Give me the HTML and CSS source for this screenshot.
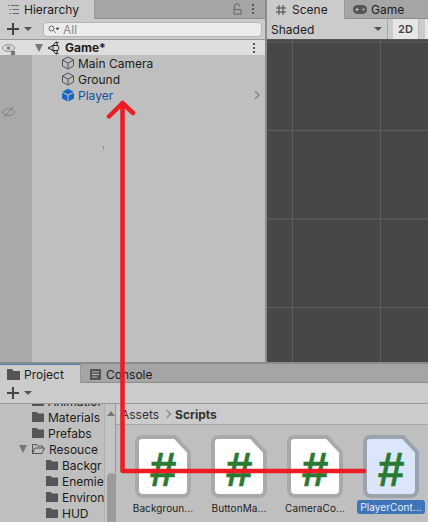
FILE: index.html
```html
<!DOCTYPE html>
<html lang="en">
<head>
  <meta charset="UTF-8">
  <title>Unity Editor</title>
  <link rel="stylesheet" href="styles.css">
</head>
<body>
  <div class="editor">
    <div class="top">
      <section class="hierarchy">
        <div class="tabbar">
          <div class="tab tab-first">
            <svg width="11" height="11" viewBox="0 0 11 11"><path d="M0 1.500h1.500M3 1.500h8M1.500 5.500H3M4.500 5.500H11M1.500 9.500H3M4.500 9.500H11" stroke="#666" fill="none"/></svg>
            <span>Hierarchy</span>
          </div>
          <div class="tab-tools">
            <svg width="9" height="12" viewBox="0 0 9 12"><path d="M1 6.500h7v4.500H1zM1.500 6.500V3.200a2.500 2.500 0 0 1 5 0" stroke="#666" fill="none"/></svg>
            <span class="dots"><i></i><i></i><i></i></span>
          </div>
        </div>
        <div class="toolbar">
          <div class="plus"><span class="plus-sign"></span><span class="caret"></span></div>
          <div class="search">
            <svg width="11" height="9" viewBox="0 0 11 9"><circle cx="3.500" cy="3.500" r="2.500" stroke="#666" fill="none"/><path d="M5.500 5.500l2.500 2.500M8 3h3l-1.500 2z" stroke="#666" stroke-width=".8"/></svg>
            <span>All</span>
          </div>
        </div>
        <div class="hier-body">
          <div class="eye-col">
            <svg class="eye" width="15" height="12" viewBox="0 0 15 12"><path d="M1 5c2-2.600 4-3.500 6.500-3.500S12 2.400 14 5c-2 2.600-4 3.500-6.500 3.500S3 7.600 1 5z" stroke="#8a8a8a" fill="none"/><circle cx="7.500" cy="5" r="2" fill="#8a8a8a"/><rect x="10" y="8" width="4" height="4" fill="#777"/></svg>
            <svg class="eye-off" width="15" height="12" viewBox="0 0 15 12"><path d="M1 6c2-2.600 4-3.500 6.500-3.500S12 3.400 14 6c-2 2.600-4 3.500-6.500 3.500S3 8.600 1 6zM3 11.500L12 .5" stroke="#808080" fill="none"/></svg>
          </div>
          <div class="tree">
            <div class="scene-row">
              <span class="tri"></span>
              <svg width="14" height="14" viewBox="0 0 14 14"><path d="M1 7l5-2.500L9 1l2.500.5M1 7l5 2.500L9 13l2.500-.5M6 4.500v5M9 1l3 6-3 6M6 4.500h5M6 9.500h5" stroke="#222" fill="none"/></svg>
              <b>Game*</b>
              <span class="dots"><i></i><i></i><i></i></span>
            </div>
            <div class="obj-row">
              <svg width="14" height="14" viewBox="0 0 14 14"><path d="M7 1l5.500 3v6L7 13l-5.500-3V4zM1.500 4L7 7l5.500-3M7 7v6" stroke="#555" fill="none"/></svg>
              <span>Main Camera</span>
            </div>
            <div class="obj-row">
              <svg width="14" height="14" viewBox="0 0 14 14"><path d="M7 1l5.500 3v6L7 13l-5.500-3V4zM1.500 4L7 7l5.500-3M7 7v6" stroke="#555" fill="none"/></svg>
              <span>Ground</span>
            </div>
            <div class="obj-row player">
              <svg width="14" height="14" viewBox="0 0 14 14"><path d="M7 .8l5.800 3L7 6.600 1.200 3.800zM1 4.800l5.500 2.800v5.900L1 10.500zM13 4.800L7.500 7.600v5.900l5.500-3z" fill="#1668c4"/></svg>
              <span>Player</span>
              <svg class="chev" width="7" height="10" viewBox="0 0 7 10"><path d="M1 1l4 4-4 4" stroke="#808080" stroke-width="1.300" fill="none"/></svg>
            </div>
          </div>
        </div>
      </section>
      <section class="scene">
        <div class="tabbar">
          <div class="tab tab-scene">
            <svg width="10" height="10" viewBox="0 0 10 10"><path d="M3 0v10M7 0v10M0 3h10M0 7h10" stroke="#444" fill="none"/></svg>
            <span>Scene</span>
          </div>
          <div class="tab tab-game">
            <svg width="14" height="9" viewBox="0 0 14 9"><rect width="14" height="9" rx="4.500" fill="#555"/><path d="M2.500 4.500h3M4 3v3" stroke="#ccc"/><circle cx="10.500" cy="4.500" r="1" fill="#ccc"/></svg>
            <span>Game</span>
          </div>
        </div>
        <div class="toolbar scene-tools">
          <div class="shaded"><span>Shaded</span><span class="caret"></span></div>
          <div class="btn-2d">2D</div>
          <div class="btn-next"></div>
        </div>
        <div class="viewport"></div>
      </section>
    </div>
    <section class="project">
      <div class="tabbar">
        <div class="tab tab-project">
          <svg width="13" height="11" viewBox="0 0 13 11"><path d="M0 0h5l1.500 2H13v9H0z" fill="#555"/></svg>
          <span>Project</span>
        </div>
        <div class="tab tab-console">
          <svg width="11" height="11" viewBox="0 0 11 11"><rect width="11" height="11" fill="#555"/><path d="M2 3h7M2 5.500h7M2 8h5" stroke="#bbb"/></svg>
          <span>Console</span>
        </div>
      </div>
      <div class="toolbar">
        <div class="plus"><span class="plus-sign"></span><span class="caret"></span></div>
      </div>
      <div class="project-body">
        <div class="folders">
          <div class="folder-list">
            <div class="folder"><span class="fld"></span>Animatior</div>
            <div class="folder"><span class="fld"></span>Materials</div>
            <div class="folder"><span class="fld"></span>Prefabs</div>
            <div class="folder parent">
              <span class="tri"></span>
              <svg width="13" height="10" viewBox="0 0 13 10"><path d="M.5 9.500V.5h4l1 1.500h5v2M.5 9.500h9.500l2.500-5.500H3z" stroke="#555" fill="none"/></svg>
              Resouce
            </div>
            <div class="folder sub"><span class="fld"></span>Backgr</div>
            <div class="folder sub"><span class="fld"></span>Enemie</div>
            <div class="folder sub"><span class="fld"></span>Environ</div>
            <div class="folder sub"><span class="fld"></span>HUD</div>
          </div>
          <div class="scrollbar"><span class="arrow-up"></span><span class="thumb"></span></div>
        </div>
        <div class="assets">
          <div class="crumbs"><span>Assets</span><span class="sep"></span><b>Scripts</b></div>
          <div class="grid">
            <div class="script">
              <svg class="page" width="56" height="63" viewBox="0 0 56 63"><path d="M7 2h33l14 15v38a6 6 0 0 1-6 6H8a6 6 0 0 1-6-6V7a5 5 0 0 1 5-5z"/><text x="28" y="51">#</text></svg>
              <p>Backgroun...</p>
            </div>
            <div class="script">
              <svg class="page" width="56" height="63" viewBox="0 0 56 63"><path d="M7 2h33l14 15v38a6 6 0 0 1-6 6H8a6 6 0 0 1-6-6V7a5 5 0 0 1 5-5z"/><text x="28" y="51">#</text></svg>
              <p>ButtonMa...</p>
            </div>
            <div class="script">
              <svg class="page" width="56" height="63" viewBox="0 0 56 63"><path d="M7 2h33l14 15v38a6 6 0 0 1-6 6H8a6 6 0 0 1-6-6V7a5 5 0 0 1 5-5z"/><text x="28" y="51">#</text></svg>
              <p>CameraCo...</p>
            </div>
            <div class="script picked">
              <svg class="page" width="56" height="63" viewBox="0 0 56 63"><path d="M7 2h33l14 15v38a6 6 0 0 1-6 6H8a6 6 0 0 1-6-6V7a5 5 0 0 1 5-5z"/><text x="28" y="51">#</text></svg>
              <p>PlayerCont...</p>
            </div>
          </div>
        </div>
      </div>
    </section>
    <svg class="arrow" width="428" height="522" viewBox="0 0 428 522">
      <rect x="103" y="146" width="1" height="3" fill="#8a8a8a"/>
      <path d="M122.500 471V103M109 116.500L122.500 103 133 113M122.500 471H364" stroke="#ed1c24" stroke-width="4.500" fill="none" stroke-linecap="round" stroke-linejoin="round"/>
    </svg>
  </div>
</body>
</html>
```

FILE: styles.css
```css
* {
  box-sizing: border-box;
}

body {
  margin: 0;
  font-family: "Inter", "Liberation Sans", sans-serif;
  font-size: 12px;
  color: #1c1c1c;
  background: #8c8c8c;
}

.editor {
  position: relative;
  width: 428px;
  height: 522px;
  overflow: hidden;
  display: flex;
  flex-direction: column;
}

.top {
  flex: none;
  height: 362px;
  display: flex;
  gap: 2px;
}

/* tabs */
.tabbar {
  flex: none;
  height: 19px;
  display: flex;
  background: #a5a5a5;
  border-bottom: 1px solid #8e8e8e;
}

.tab {
  height: 19px;
  display: flex;
  align-items: center;
  gap: 5px;
  padding-left: 8px;
}

.tab-first {
  width: 95px;
  background: #cbcbcb;
  border-right: 1px solid #999;
}

.tab-scene {
  width: 78px;
  padding-left: 9px;
  gap: 6px;
  background: #cbcbcb;
  border-right: 1px solid #999;
}

.tab-game {
  gap: 4px;
}

.tab-project {
  width: 81px;
  padding-left: 7px;
  gap: 4px;
  background: #cbcbcb;
  border-top: 1px solid #4a82c3;
  border-right: 1px solid #999;
}

.tab-console {
  padding-left: 9px;
  padding-top: 1px;
}

.tab-tools {
  margin-left: auto;
  display: flex;
  align-items: center;
  gap: 10px;
  padding-right: 11px;
}

/* toolbars */
.toolbar {
  flex: none;
  height: 21px;
  display: flex;
  align-items: center;
  background: #cbcbcb;
  border-bottom: 1px solid #999;
}

.plus {
  flex: none;
  width: 43px;
  display: flex;
  align-items: center;
  gap: 5px;
  padding-left: 7px;
}

.plus-sign {
  width: 12px;
  height: 12px;
  background: linear-gradient(#444, #444) center / 12px 2px no-repeat, linear-gradient(#444, #444) center / 2px 12px no-repeat;
}

.caret {
  width: 0;
  height: 0;
  border-left: 4px solid transparent;
  border-right: 4px solid transparent;
  border-top: 4px solid #555;
}

.search {
  flex: 1;
  height: 15px;
  margin-right: 3px;
  display: flex;
  align-items: center;
  gap: 4px;
  padding-left: 4px;
  background: #ececec;
  border: 1px solid #b5b5b5;
  border-radius: 4px;
  color: #8a8a8a;
}

/* hierarchy */
.hierarchy {
  width: 265px;
  background: #bfbfbf;
  display: flex;
  flex-direction: column;
}

.hier-body {
  flex: 1;
  display: flex;
}

.eye-col {
  position: relative;
  z-index: 1;
  width: 32px;
  background: linear-gradient(transparent 15px, #a9a9a9 15px);
  display: flex;
  flex-direction: column;
}

.eye {
  margin: 3px 0 0 1px;
}

.eye-off {
  margin: 51px 0 0 1px;
}

.tree {
  flex: 1;
}

.scene-row {
  height: 15px;
  margin-left: -32px;
  padding-left: 35px;
  display: flex;
  align-items: center;
  gap: 4px;
  background: #dedede;
}

.scene-row .dots {
  margin-left: auto;
  margin-right: 10px;
}

.tri {
  flex: none;
  width: 0;
  height: 0;
  border-left: 4px solid transparent;
  border-right: 4px solid transparent;
  border-top: 8px solid #777;
}

.obj-row {
  height: 16px;
  padding-left: 29px;
  display: flex;
  align-items: center;
  gap: 3px;
}

.player {
  color: #1b4f9c;
  padding-right: 4px;
}

.chev {
  margin-left: auto;
}

.dots {
  display: flex;
  flex-direction: column;
  gap: 2px;
}

.dots i {
  display: block;
  width: 2px;
  height: 2px;
  background: #555;
}

/* scene view */
.scene {
  flex: 1;
  display: flex;
  flex-direction: column;
}

.scene-tools {
  border-bottom-color: #555;
}

.shaded {
  width: 121px;
  height: 20px;
  padding: 0 5px 0 4px;
  display: flex;
  justify-content: space-between;
  align-items: center;
  border-right: 1px solid #a5a5a5;
}

.btn-2d {
  margin-left: 5px;
  width: 26px;
  height: 20px;
  background: #e6e6e6;
  font-size: 11px;
  font-weight: 600;
  display: flex;
  align-items: center;
  justify-content: center;
  color: #444;
  border-right: 1px solid #bbb;
}

.btn-next {
  margin-left: 6px;
  flex: 1;
  height: 20px;
  background: #e6e6e6;
}

.viewport {
  flex: 1;
  background-color: #474747;
  background-image: linear-gradient(90deg, #5f5f5f 1px, transparent 1px), linear-gradient(#5f5f5f 1px, transparent 1px);
  background-size: 88px 88.500px;
  background-position: 25px 1.500px;
}

/* project */
.project {
  flex: 1;
  min-height: 0;
  margin-top: 2px;
  background: #bfbfbf;
  display: flex;
  flex-direction: column;
}

.project-body {
  flex: 1;
  min-height: 0;
  display: flex;
}

.folders {
  width: 116px;
  display: flex;
  border-right: 1px solid #999;
  overflow: hidden;
}

.folder-list {
  flex: 1;
  margin-top: -11px;
}

.folder {
  height: 16px;
  padding-left: 32px;
  display: flex;
  align-items: center;
  gap: 4px;
  white-space: nowrap;
}

.folder.parent {
  padding-left: 19px;
  gap: 4px;
}

.folder.parent .tri {
  margin-right: 1px;
}

.folder.sub {
  padding-left: 46px;
}

.fld {
  flex: none;
  width: 12px;
  height: 10px;
  background: #555;
  clip-path: polygon(0 0, 40% 0, 50% 15%, 100% 15%, 100% 100%, 0 100%);
}

.scrollbar {
  width: 13px;
  flex: none;
  background: #c4c4c4;
  border-left: 1px solid #b0b0b0;
  display: flex;
  flex-direction: column;
  align-items: center;
  padding-top: 7px;
}

.arrow-up {
  width: 0;
  height: 0;
  border-left: 4px solid transparent;
  border-right: 4px solid transparent;
  border-bottom: 5px solid #777;
}

.thumb {
  flex: none;
  width: 9px;
  height: 60px;
  margin-top: 57px;
  border-radius: 5px;
  background: #9c9c9c;
}

.assets {
  flex: 1;
}

.crumbs {
  height: 21px;
  display: flex;
  align-items: center;
  gap: 5px;
  padding-left: 5px;
  background: #cbcbcb;
  border-bottom: 1px solid #a5a5a5;
  color: #333;
}

.sep {
  width: 6px;
  height: 6px;
  border-top: 1px solid #777;
  border-right: 1px solid #777;
  transform: rotate(45deg);
}

.grid {
  display: flex;
  gap: 20px;
  padding: 10px 0 0 19px;
}

.script {
  width: 56px;
  display: flex;
  flex-direction: column;
  align-items: center;
}

.page path {
  fill: #fff;
  stroke: #a9a9a9;
  stroke-width: 4;
  stroke-linejoin: round;
}

.page text {
  font-family: "Liberation Sans", sans-serif;
  font-size: 48px;
  font-weight: 700;
  text-anchor: middle;
  fill: #2b7a34;
  stroke: #2b7a34;
  stroke-width: .5;
}

.script p {
  margin: 3px 0 0;
  font-size: 10px;
  line-height: 14px;
  letter-spacing: .1px;
  white-space: nowrap;
  color: #222;
}

.picked .page path {
  fill: #dce6fa;
  stroke: #9aa3ae;
}

.picked p {
  margin-top: 2px;
  padding: 0 3px;
  background: #3e75b8;
  color: #eaf0f8;
  border-radius: 3px;
}

.arrow {
  position: absolute;
  left: 0;
  top: 0;
  pointer-events: none;
}
```
